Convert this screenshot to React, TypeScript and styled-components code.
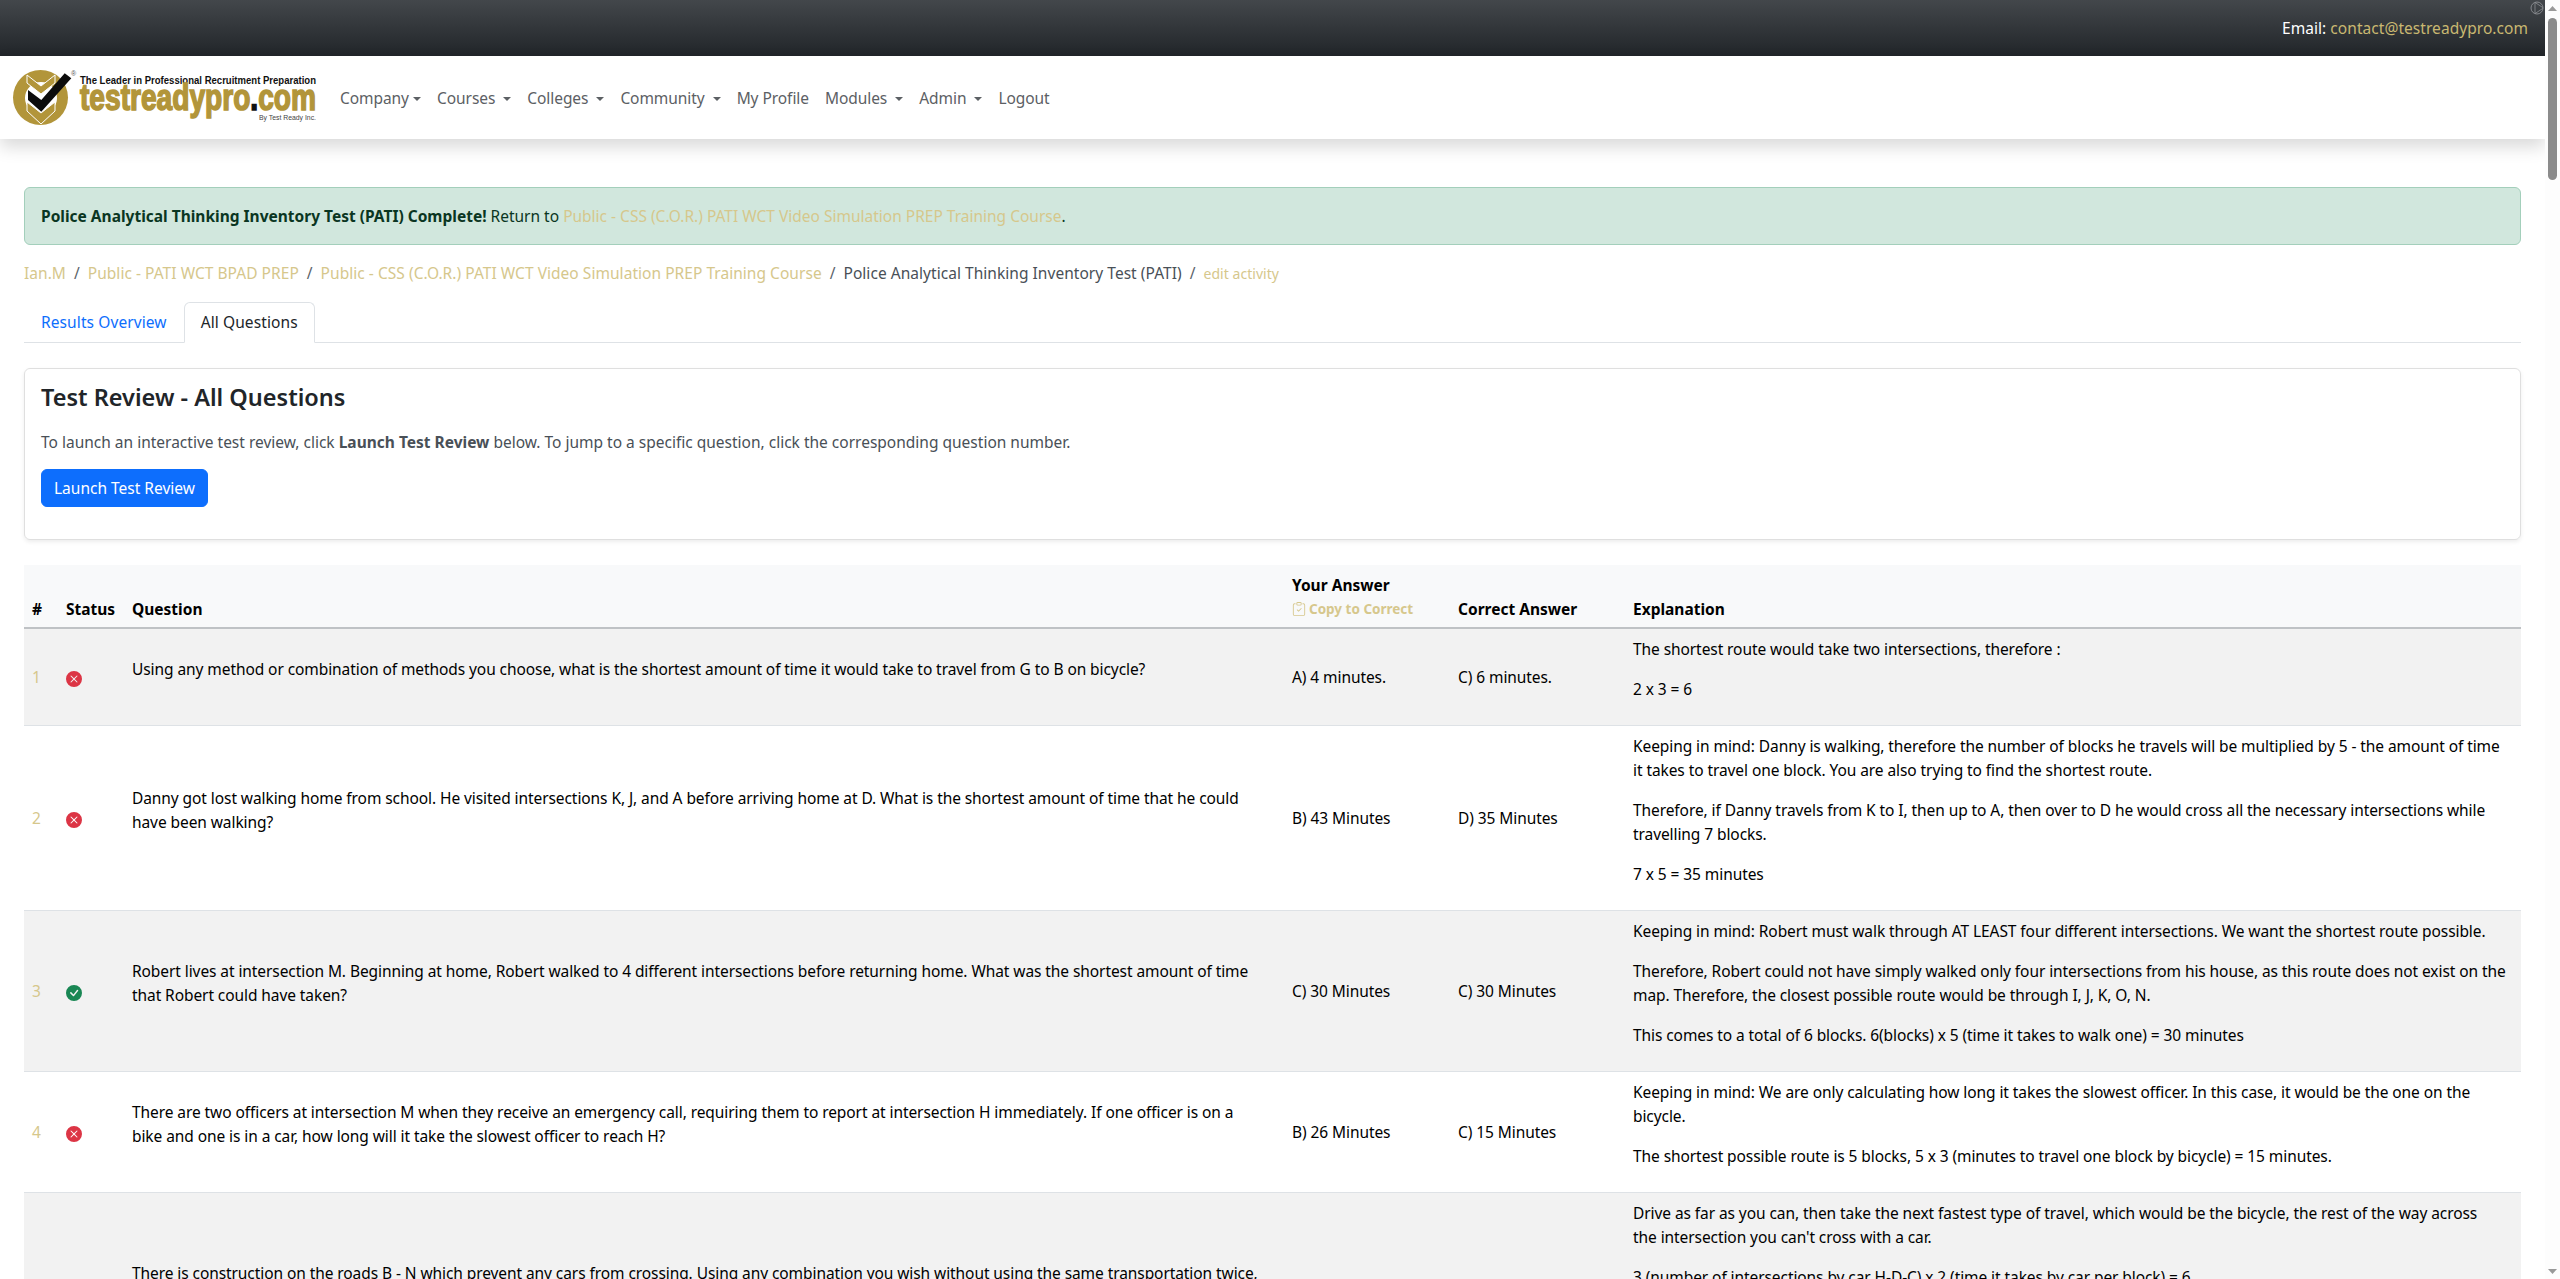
import styled, { createGlobalStyle } from "styled-components";
import { BsCheckCircleFill, BsClipboardCheck, BsXCircleFill } from "react-icons/bs";

const GOLD = "#d6c78c";
const FONT = `"Noto Sans", "Open Sans", sans-serif`;

const rows = [
  {
    n: 1,
    ok: false,
    question:
      "Using any method or combination of methods you choose, what is the shortest amount of time it would take to travel from G to B on bicycle?",
    answer: "A) 4 minutes.",
    correct: "C) 6 minutes.",
    explanation: ["The shortest route would take two intersections, therefore :", "2 x 3 = 6"],
  },
  {
    n: 2,
    ok: false,
    question:
      "Danny got lost walking home from school. He visited intersections K, J, and A before arriving home at D. What is the shortest amount of time that he could have been walking?",
    answer: "B) 43 Minutes",
    correct: "D) 35 Minutes",
    explanation: [
      "Keeping in mind: Danny is walking, therefore the number of blocks he travels will be multiplied by 5 - the amount of time it takes to travel one block. You are also trying to find the shortest route.",
      "Therefore, if Danny travels from K to I, then up to A, then over to D he would cross all the necessary intersections while travelling 7 blocks.",
      "7 x 5 = 35 minutes",
    ],
  },
  {
    n: 3,
    ok: true,
    question:
      "Robert lives at intersection M. Beginning at home, Robert walked to 4 different intersections before returning home. What was the shortest amount of time that Robert could have taken?",
    answer: "C) 30 Minutes",
    correct: "C) 30 Minutes",
    explanation: [
      "Keeping in mind: Robert must walk through AT LEAST four different intersections. We want the shortest route possible.",
      "Therefore, Robert could not have simply walked only four intersections from his house, as this route does not exist on the map. Therefore, the closest possible route would be through I, J, K, O, N.",
      "This comes to a total of 6 blocks. 6(blocks) x 5 (time it takes to walk one) = 30 minutes",
    ],
  },
  {
    n: 4,
    ok: false,
    question:
      "There are two officers at intersection M when they receive an emergency call, requiring them to report at intersection H immediately. If one officer is on a\nbike and one is in a car, how long will it take the slowest officer to reach H?",
    answer: "B) 26 Minutes",
    correct: "C) 15 Minutes",
    explanation: [
      "Keeping in mind: We are only calculating how long it takes the slowest officer. In this case, it would be the one on the bicycle.",
      "The shortest possible route is 5 blocks, 5 x 3 (minutes to travel one block by bicycle) = 15 minutes.",
    ],
  },
  {
    n: 5,
    ok: false,
    question:
      "There is construction on the roads B - N which prevent any cars from crossing. Using any combination you wish without using the same transportation twice,\nwhat is the shortest amount of time it would take?",
    answer: "",
    correct: "",
    explanation: [
      "Drive as far as you can, then take the next fastest type of travel, which would be the bicycle, the rest of the way across\nthe intersection you can't cross with a car.",
      "3 (number of intersections by car H-D-C) x 2 (time it takes by car per block) = 6",
      "\u00a0",
      "\u00a0",
    ],
  },
];

const navItems = [
  { label: "Company", caret: true },
  { label: "Courses ", caret: true },
  { label: "Colleges ", caret: true },
  { label: "Community ", caret: true },
  { label: "My Profile", caret: false },
  { label: "Modules ", caret: true },
  { label: "Admin ", caret: true },
  { label: "Logout", caret: false },
];

export default function App() {
  return (
    <Shell>
      <GlobalStyle />
      <Page>
        <TopBar>
          <span>
            Email: <TopLink href="#">contact@testreadypro.com</TopLink>
          </span>
          <AdMark viewBox="0 0 14 14">
            <circle cx="7" cy="7" r="6" fill="none" stroke="#8d9094" strokeWidth="0.9" />
            <path d="M5 1.4V12.6M5 1.4L12.8 6.6M5 12.6L12.8 7.4" fill="none" stroke="#8d9094" strokeWidth="0.8" />
          </AdMark>
        </TopBar>
        <NavBar>
          <Logo />
          <NavList>
            {navItems.map((item) => (
              <NavLink key={item.label} href="#" $caret={item.caret}>
                {item.label}
              </NavLink>
            ))}
          </NavList>
        </NavBar>
        <Main>
          <Alert>
            <strong>Police Analytical Thinking Inventory Test (PATI) Complete!</strong> Return to{" "}
            <GoldLink href="#">Public - CSS (C.O.R.) PATI WCT Video Simulation PREP Training Course</GoldLink>.
          </Alert>
          <Breadcrumb>
            <GoldLink href="#">Ian.M</GoldLink>
            <Slash>/</Slash>
            <GoldLink href="#">Public - PATI WCT BPAD PREP</GoldLink>
            <Slash>/</Slash>
            <GoldLink href="#">Public - CSS (C.O.R.) PATI WCT Video Simulation PREP Training Course</GoldLink>
            <Slash>/</Slash>
            <span>Police Analytical Thinking Inventory Test (PATI)</span>
            <Slash>/</Slash>
            <SmallLink href="#">edit activity</SmallLink>
          </Breadcrumb>
          <Tabs>
            <Tab href="#">Results Overview</Tab>
            <Tab href="#" $active>
              All Questions
            </Tab>
          </Tabs>
          <Card>
            <CardTitle>Test Review - All Questions</CardTitle>
            <CardText>
              To launch an interactive test review, click <strong>Launch Test Review</strong> below. To jump to a
              specific question, click the corresponding question number.
            </CardText>
            <PrimaryButton>Launch Test Review</PrimaryButton>
          </Card>
          <ReviewTable>
            <colgroup>
              <col style={{ width: 34 }} />
              <col style={{ width: 66 }} />
              <col style={{ width: 1160 }} />
              <col style={{ width: 166 }} />
              <col style={{ width: 175 }} />
              <col style={{ width: 896 }} />
            </colgroup>
            <thead>
              <tr>
                <th>#</th>
                <th>Status</th>
                <th>Question</th>
                <th>
                  Your Answer
                  <CopyLink>
                    <BsClipboardCheck size={14} />
                    Copy to Correct
                  </CopyLink>
                </th>
                <th>Correct Answer</th>
                <th>Explanation</th>
              </tr>
            </thead>
            <tbody>
              {rows.map((row) => (
                <tr key={row.n}>
                  <td>
                    <GoldLink href="#">{row.n}</GoldLink>
                  </td>
                  <td>
                    <StatusIcon $ok={row.ok}>
                      {row.ok ? <BsCheckCircleFill size={16} /> : <BsXCircleFill size={16} />}
                    </StatusIcon>
                  </td>
                  <td>
                    <Para>{row.question}</Para>
                  </td>
                  <td>{row.answer}</td>
                  <td>{row.correct}</td>
                  <td>
                    {row.explanation.map((text, i) => (
                      <Para key={i}>{text}</Para>
                    ))}
                  </td>
                </tr>
              ))}
            </tbody>
          </ReviewTable>
        </Main>
      </Page>
      <ScrollRail>
        <RailArrow viewBox="0 0 9 5">
          <path d="M4.5 0L9 5H0Z" fill="#999" />
        </RailArrow>
        <RailThumb />
        <RailArrow viewBox="0 0 9 5" $down>
          <path d="M4.5 5L9 0H0Z" fill="#999" />
        </RailArrow>
      </ScrollRail>
    </Shell>
  );
}

function Logo() {
  return (
    <LogoSvg viewBox="0 0 306 58" aria-label="testreadypro.com">
      <circle cx="28.5" cy="28.5" r="27.5" fill="#b2953a" />
      <circle cx="29" cy="29" r="16" fill="#fff" />
      <path d="M15 6L29 17L43 6L43 14L29 25L15 14Z" fill="#b2953a" stroke="#fff" strokeWidth="1" />
      <path d="M15 33L29 44L43 33L43 42L29 55L15 42Z" fill="#b2953a" stroke="#fff" strokeWidth="1" />
      <path d="M16 21L29.3 31L52.7 4.3L59.3 9.3L29.3 42.7L16 31Z" fill="#0c0c0c" />
      <LogoMark x="59" y="7">
        ®
      </LogoMark>
      <LogoTag x="68" y="14.5" textLength="236" lengthAdjust="spacingAndGlyphs">
        The Leader in Professional Recruitment Preparation
      </LogoTag>
      <LogoName x="68" y="41" textLength="236" lengthAdjust="spacingAndGlyphs">
        testreadypro<tspan fill="#111" stroke="#111">.</tspan>com
      </LogoName>
      <LogoBy x="247" y="50.5" textLength="57" lengthAdjust="spacingAndGlyphs">
        By Test Ready Inc.
      </LogoBy>
    </LogoSvg>
  );
}

const GlobalStyle = createGlobalStyle`
  body {
    margin: 0;
    font-family: ${FONT};
    font-size: 15.5px;
    line-height: 24px;
    color: #212529;
    background: #fff;
  }
  strong {
    font-weight: 700;
  }
`;

const Shell = styled.div`
  display: flex;
  height: 100vh;
  overflow: hidden;
`;

const Page = styled.div`
  flex: 1;
  min-width: 0;
  overflow: hidden;
`;

const ScrollRail = styled.div`
  display: flex;
  flex-direction: column;
  align-items: center;
  flex: 0 0 15px;
  padding: 6px 0 5px;
  box-sizing: border-box;
  background: #fdfdfd;
`;

const RailArrow = styled.svg<{ $down?: boolean }>`
  width: 9px;
  height: 5px;
  margin-top: ${(p) => (p.$down ? "auto" : "0")};
`;

const RailThumb = styled.div`
  width: 9px;
  height: 162px;
  margin-top: 7px;
  border-radius: 5px;
  background: #8b8b8b;
`;

const TopBar = styled.div`
  position: relative;
  display: flex;
  align-items: center;
  justify-content: flex-end;
  height: 56px;
  padding-right: 17px;
  background: linear-gradient(180deg, #43474b 0%, #212529 100%);
  color: #fff;
  letter-spacing: 0.05px;
`;

const TopLink = styled.a`
  color: #c9b871;
  text-decoration: none;
`;

const AdMark = styled.svg`
  position: absolute;
  top: 1px;
  right: 1px;
  width: 14px;
  height: 14px;
`;

const NavBar = styled.nav`
  position: relative;
  display: flex;
  align-items: center;
  height: 83px;
  padding-left: 12px;
  background: #fff;
  box-shadow: 0 8px 16px rgba(0, 0, 0, 0.15);
`;

const LogoSvg = styled.svg`
  width: 306px;
  height: 58px;
  margin-right: 14px;
  overflow: visible;
`;

const LogoMark = styled.text`
  font-family: "Liberation Sans", sans-serif;
  font-size: 7px;
  fill: #555;
`;

const LogoTag = styled.text`
  font-family: "Liberation Sans", sans-serif;
  font-size: 11px;
  font-weight: 700;
  fill: #111;
`;

const LogoName = styled.text`
  font-family: "Liberation Sans", sans-serif;
  font-size: 36px;
  font-weight: 700;
  fill: #b2953a;
  stroke: #b2953a;
  stroke-width: 1.6px;
`;

const LogoBy = styled.text`
  font-family: "Liberation Sans", sans-serif;
  font-size: 8px;
  fill: #444;
`;

const NavList = styled.div`
  display: flex;
  align-items: center;
  letter-spacing: -0.06px;
`;

const NavLink = styled.a<{ $caret: boolean }>`
  padding: 8px;
  color: #5c6064;
  text-decoration: none;
  white-space: pre;

  &::after {
    content: "";
    display: ${(p) => (p.$caret ? "inline-block" : "none")};
    margin-left: 4px;
    vertical-align: 3px;
    border-top: 4px solid;
    border-right: 4px solid transparent;
    border-left: 4px solid transparent;
  }
`;

const Main = styled.main`
  padding: 48px 24px 0;
`;

const Alert = styled.div`
  padding: 16px;
  border: 1px solid #a3cfbb;
  border-radius: 6px;
  background: #d1e7dd;
  color: #0a3622;
`;

const GoldLink = styled.a`
  color: ${GOLD};
  text-decoration: none;
`;

const SmallLink = styled(GoldLink)`
  font-size: 14px;
`;

const Breadcrumb = styled.div`
  display: flex;
  align-items: baseline;
  margin-top: 16px;
  margin-bottom: 16px;
  color: #495057;
  letter-spacing: 0.04px;
`;

const Slash = styled.span`
  padding: 0 8px;
  color: #5b636a;
`;

const Tabs = styled.div`
  display: flex;
  border-bottom: 1px solid #dee2e6;
  letter-spacing: 0.1px;
`;

const Tab = styled.a<{ $active?: boolean }>`
  margin-bottom: -1px;
  padding: 8px 16px;
  line-height: 23px;
  border: 1px solid transparent;
  border-color: ${(p) => (p.$active ? "#dee2e6 #dee2e6 #fff" : "transparent")};
  border-radius: 6px 6px 0 0;
  background: ${(p) => (p.$active ? "#fff" : "transparent")};
  color: ${(p) => (p.$active ? "#212529" : "#0d6efd")};
  text-decoration: none;
`;

const Card = styled.section`
  margin-top: 25px;
  margin-bottom: 25px;
  padding: 16px;
  height: 172px;
  box-sizing: border-box;
  border: 1px solid rgba(0, 0, 0, 0.125);
  border-radius: 6px;
  box-shadow: 0 2px 4px rgba(0, 0, 0, 0.075);
`;

const CardTitle = styled.h4`
  margin: -2px 0 18px;
  font-size: 23.5px;
  font-weight: 600;
  line-height: 29px;
`;

const CardText = styled.p`
  margin: 0 0 15px;
  color: #495057;
`;

const PrimaryButton = styled.button`
  height: 38px;
  padding: 6px 12px;
  border: 1px solid #0d6efd;
  border-radius: 6px;
  background: #0d6efd;
  color: #fff;
  font: inherit;
`;

const ReviewTable = styled.table`
  width: 100%;
  table-layout: fixed;
  border-collapse: collapse;
  color: #000;

  th {
    padding: 8px 8px 6px;
    font-weight: 700;
    text-align: left;
    vertical-align: bottom;
    background: #f8f9fa;
    border-bottom: 2px solid #bfc2c5;
  }

  td {
    padding: 8px;
    vertical-align: middle;
    border-bottom: 1px solid #dee2e6;
    letter-spacing: -0.08px;
  }

  tbody tr:nth-child(odd) td {
    background: #f2f2f2;
  }
`;

const CopyLink = styled.span`
  display: flex;
  align-items: center;
  gap: 3px;
  font-size: 13.5px;
  line-height: 24px;
  color: ${GOLD};
`;

const StatusIcon = styled.span<{ $ok: boolean }>`
  display: inline-flex;
  vertical-align: middle;
  color: ${(p) => (p.$ok ? "#198754" : "#dc3545")};
`;

const Para = styled.p`
  margin: 0 0 16px;
  white-space: pre-line;
`;
